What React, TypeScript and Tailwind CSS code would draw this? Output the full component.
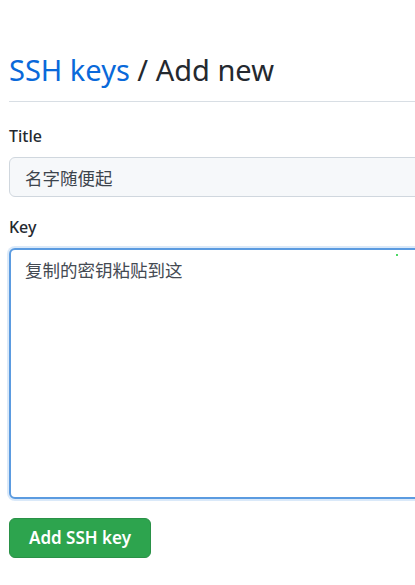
export default function App() {
  return (
    <div className="w-[415px] h-[585px] overflow-hidden bg-white" style={{ fontFamily: '"Noto Sans", "Noto Sans CJK SC", sans-serif' }}>
      <div className="w-[460px] pl-[9px] pt-[50px]">
        {/* Header */}
        <h1 className="pb-[11px] text-[29px] leading-[40px] font-normal text-[#24292f] border-b border-[#d8dee4]">
          <a className="text-[#0969da]">SSH keys</a> / Add new
        </h1>

        {/* Title field */}
        <div className="mt-[22px]">
          <label className="block text-[16px] leading-[24px] font-medium text-[#24292f]">Title</label>
          <input
            readOnly
            value="名字随便起"
            className="mt-[9px] block w-full h-[40px] rounded-[6px] border border-[#d0d7de] bg-[#f6f8fa] px-[15px] text-[17.5px] text-[#3d444d] outline-none"
          />
        </div>

        {/* Key field */}
        <div className="mt-[18px]">
          <label className="block text-[16px] leading-[24px] font-medium text-[#24292f]">Key</label>
          <div className="relative mt-[9px]">
            <textarea
              readOnly
              value="复制的密钥粘贴到这"
              className="block w-full h-[251px] resize-none rounded-[6px] border-2 border-[#5b9be0] bg-white px-[14px] py-[7px] text-[17.5px] leading-[26px] text-[#444a52] outline-none shadow-[0_0_0_2px_rgba(9,105,218,0.15)]"
            />
            <span className="absolute left-[387px] top-[6px] w-[2px] h-[2px] bg-[#4cd964]" />
          </div>
        </div>

        {/* Submit */}
        <button className="mt-[19px] h-[40px] w-[142px] rounded-[6px] bg-[#2da44e] border border-[#2a9147] text-white text-[17px] font-semibold">
          Add SSH key
        </button>
      </div>
    </div>
  );
}
